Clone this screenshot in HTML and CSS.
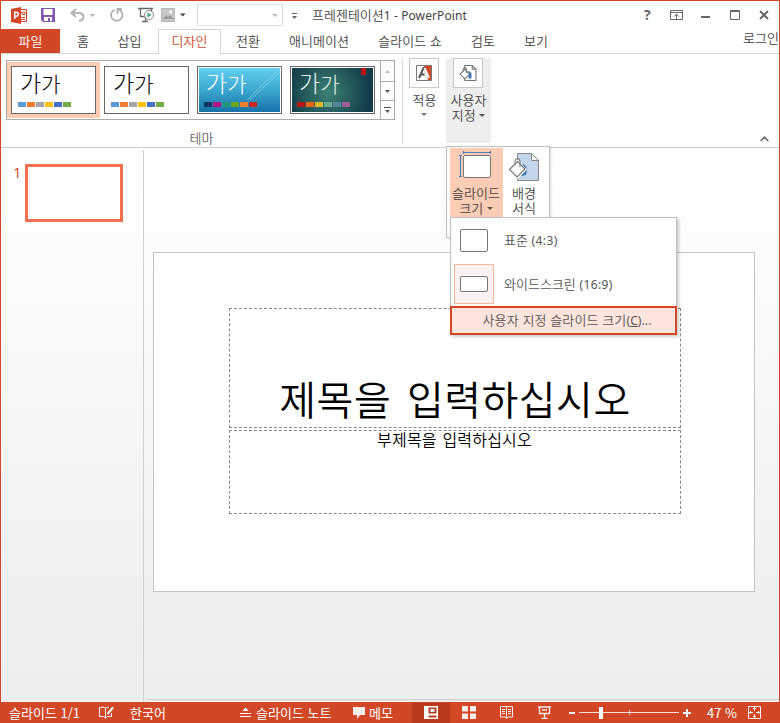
FILE: index.html
```html
<!DOCTYPE html>
<html lang="ko">
<head>
<meta charset="utf-8">
<title>프레젠테이션1 - PowerPoint</title>
<link rel="stylesheet" href="styles.css">
</head>
<body>
<div class="window">
  <header class="titlebar">
    <div class="quick">
      <svg class="q-app" width="17" height="17" viewBox="0 0 17 17"><path d="M8 2.500h7.500v12H8z" fill="#fff" stroke="#d24726"/><path d="M10 10.500h4M10 12.500h4M10 5.500h1.500v2H14" fill="none" stroke="#d24726"/><path d="M13 4v2h2" fill="none" stroke="#d24726"/><path d="M0 2L10 0v17L0 15z" fill="#d24726"/><path d="M3.700 12V5.300h1.500q2 0 2 2T5.200 9.300H4" fill="none" stroke="#fff" stroke-width="1.500"/></svg>
      <svg class="q-save" width="14" height="14" viewBox="0 0 14 14"><path d="M0 0h14v14H2L0 12z" fill="#8659ab"/><path d="M2.500 1h9v6h-9zM3 9h8v4H9v-3H7v3H3z" fill="#fff"/></svg>
      <svg class="q-undo" width="27" height="14" viewBox="0 0 27 14"><path d="M6 1L1.500 5 6 9M2 5h6.500q5 0 5 4 0 3-4.500 4" fill="none" stroke="#b1b1b1" stroke-width="2"/><path d="M20 6h5l-2.500 3z" fill="#b1b1b1"/></svg>
      <svg class="q-redo" width="14" height="14" viewBox="0 0 14 14"><path d="M4.500 1.800A5.700 5.700 0 1 0 9 1.800" fill="none" stroke="#b1b1b1" stroke-width="1.800"/><path d="M7.500 6V1H12" fill="none" stroke="#b1b1b1" stroke-width="1.800"/></svg>
      <svg class="q-show" width="17" height="16" viewBox="0 0 17 16"><path d="M0 1.500h15M2.500 2v7.500H7M4 14.500h6M7.500 10v4M13.500 2v3" fill="none" stroke="#686868" stroke-width="1.300"/><circle cx="11" cy="8" r="4.500" fill="#fff" stroke="#888"/><path d="M9.500 5.500l4 2.500-4 2.500z" fill="#3ba273"/></svg>
      <svg class="q-pic" width="25" height="14" viewBox="0 0 25 14"><path d="M.5.500h13v13H.5z" fill="#c8c8c8" stroke="#b4b4b4"/><path d="M2 11l3-4 2 2 2-2 4 4z" fill="#999"/><circle cx="9.500" cy="4" r="1.500" fill="#fff"/><path d="M19 5.500h5.500L21.750 8.500z" fill="#444"/></svg>
      <div class="q-box"><i class="tri pale"></i></div>
      <svg class="q-more" width="6" height="7" viewBox="0 0 6 7"><path d="M0 .5h5" stroke="#666"/><path d="M0 3h5L2.500 6z" fill="#666"/></svg>
    </div>
    <div class="caption">프레젠테이션<span class="latin">1 - PowerPoint</span></div>
    <div class="controls">
      <span class="help">?</span>
      <svg class="c-ribbon" width="13" height="10" viewBox="0 0 13 10"><path d="M.5.500h12v9H.5zM1 2.500h11" fill="none" stroke="#666"/><path d="M6.500 9V4M4 6.500L6.500 4 9 6.500" fill="none" stroke="#666"/></svg>
      <svg class="c-min" width="9" height="10" viewBox="0 0 9 10"><path d="M0 7h9" stroke="#666" stroke-width="2"/></svg>
      <svg class="c-max" width="10" height="10" viewBox="0 0 10 10"><path d="M.5.500h9v9H.5zM0 1.500h10" fill="none" stroke="#666"/></svg>
      <svg class="c-close" width="10" height="10" viewBox="0 0 10 10"><path d="M1 1l8 8M9 1L1 9" stroke="#666" stroke-width="2"/></svg>
    </div>
  </header>
  <nav class="tabs">
    <span class="tab file">파일</span><span class="tab home">홈</span><span class="tab insert">삽입</span><span class="tab active">디자인</span><span class="tab trans">전환</span><span class="tab anim">애니메이션</span><span class="tab show">슬라이드 쇼</span><span class="tab review">검토</span><span class="tab view">보기</span><span class="login">로그인</span>
  </nav>
  <section class="ribbon">
    <div class="themes">
      <div class="gallery">
        <div class="theme selected"><div class="thumb"><b>가<small>가</small></b><div class="swatches office"><i></i><i></i><i></i><i></i><i></i><i></i></div></div></div>
        <div class="theme"><div class="thumb"><b>가<small>가</small></b><div class="swatches office"><i></i><i></i><i></i><i></i><i></i><i></i></div></div></div>
        <div class="theme"><div class="thumb blue"><svg class="rays" width="83" height="46"><path d="M49 33L81 2M52 33L82 5" stroke="#8bd8ef" opacity=".7"/></svg><b>가<small>가</small></b><div class="swatches celestial"><i></i><i></i><i></i><i></i><i></i><i></i></div></div></div>
        <div class="theme"><div class="thumb teal"><b>가<small>가</small></b><div class="swatches ion"><i></i><i></i><i></i><i></i><i></i><i></i></div></div></div>
        <div class="scroller">
          <span class="off"><svg width="5" height="3"><path d="M0 3h5L2.500 0z" fill="#bbb"/></svg></span>
          <span><svg width="5" height="3"><path d="M0 0h5L2.500 3z" fill="#555"/></svg></span>
          <span><svg width="7" height="6"><path d="M0 .5h7" stroke="#555"/><path d="M1 3h5L3.500 6z" fill="#555"/></svg></span>
        </div>
      </div>
      <div class="group-name">테마</div>
    </div>
    <div class="big variants">
      <div class="iconbox"><svg width="16" height="16" viewBox="0 0 16 16"><path d="M.5.500h15v15H.5z" fill="#fff" stroke="#777"/><path d="M8 1h7v14H12z" fill="#d24726"/><path d="M3 13L7.500 3h1L13 13M5 9.500h6" fill="none" stroke="#555" stroke-width="2"/><path d="M8.500 3L13 13M8.500 9.500H11" stroke="#fff" stroke-width="2"/></svg></div>
      <div class="lbl">적용</div><i class="tri"></i>
    </div>
    <div class="big customize">
      <div class="iconbox"><svg width="18" height="18" viewBox="0 0 34 34"><path d="M11 3h14l7 7v21H11z" fill="#fff" stroke="#777" stroke-width="2"/><path d="M25 3v7h7" fill="none" stroke="#777" stroke-width="2"/><path d="M18 13q8 1 5 15l-5-1z" fill="#3c78b5"/><path d="M2 19L11 10l9 9-9 9z" fill="#fff" stroke="#777" stroke-width="2"/><path d="M8 14v-4q0-3 3-3t3 3v7" fill="none" stroke="#777" stroke-width="2"/></svg></div>
      <div class="lbl">사용자<br>지정 <i class="tri"></i></div>
    </div>
    <svg class="collapse" width="9" height="6" viewBox="0 0 9 6"><path d="M.7 5L4.500 1.200 8.300 5" fill="none" stroke="#666" stroke-width="1.600"/></svg>
  </section>
  <main class="workspace">
    <aside class="slides"><span class="num">1</span><div class="mini"></div></aside>
    <div class="stage">
      <article class="slide">
        <div class="holder title">제목을 입력하십시오</div>
        <div class="holder subtitle">부제목을 입력하십시오</div>
      </article>
    </div>
  </main>
  <footer class="status">
    <span class="s-count">슬라이드 1/1</span>
    <svg class="s-spell" width="15" height="13" viewBox="0 0 15 13"><path d="M6.500 2v10.500M6.500 2Q4 .5.500 1.500v9h4l2 1.500 2-1.500h4V7M6.500 2q2-1 3.500-.5" fill="none" stroke="#fff"/><path d="M14 1.500L8.500 8" stroke="#fff" stroke-width="2"/></svg>
    <span class="s-lang">한국어</span>
    <svg class="s-noteicon" width="11" height="11" viewBox="0 0 11 11"><path d="M0 6.500h11M0 9.500h11" stroke="#fff"/><path d="M2.500 4h6l-3-3.500z" fill="#fff"/></svg>
    <span class="s-notes">슬라이드 노트</span>
    <svg class="s-memoicon" width="12" height="12" viewBox="0 0 12 12"><path d="M0 0h12v8H7l-3 4V8H0z" fill="#fdeeea"/></svg>
    <span class="s-memo">메모</span>
    <span class="s-normal"><svg width="14" height="13" viewBox="0 0 14 13"><path d="M0 0h14v13H0z" fill="#fff"/><path d="M4.500 1.500h8v6h-8zM4.500 9.500h8v2h-8z" fill="#b83b1d"/><path d="M6.500 3h4v3h-4z" fill="#fff"/></svg></span>
    <svg class="s-grid" width="14" height="13" viewBox="0 0 14 13"><path d="M0 0h6v5.500H0zM8 0h6v5.500H8zM0 7.500h6V13H0zM8 7.500h6V13H8z" fill="#fdeeea"/></svg>
    <svg class="s-read" width="13" height="13" viewBox="0 0 13 13"><path d="M.5.500h12v10.500H8L6.500 12.500 5 11H.5zM6.500 1v11M2 3.500h3M2 5.500h3M2 7.500h3M8 3.500h3M8 5.500h3M8 7.500h3" fill="none" stroke="#fdeeea"/></svg>
    <svg class="s-present" width="13" height="13" viewBox="0 0 13 13"><path d="M0 1h13M1.500 1v6.500h10V1M4 4h5M6.500 8v4M3.500 12.300h6" fill="none" stroke="#fdeeea" stroke-width="1.300"/></svg>
    <svg class="s-zoom" width="122" height="13" viewBox="0 0 122 13"><path d="M0 7h6M114 7h8M118 3v8" stroke="#fff" stroke-width="2"/><path d="M10 6.500h100M60.500 4v5" stroke="#fbded6"/><path d="M30 1h4v12h-4z" fill="#fff"/></svg>
    <span class="s-pct">47 %</span>
    <svg class="s-fit" width="13" height="13" viewBox="0 0 13 13"><path d="M.5.500h12v12H.5z" fill="none" stroke="#fdeeea"/><path d="M6.500 1v4M6.500 8v4M1 6.500h4M8 6.500h4M5 3l1.500-1.500L8 3M5 10l1.500 1.500L8 10M3 5L1.500 6.500 3 8M10 5l1.500 1.500L10 8" fill="none" stroke="#fdeeea"/></svg>
  </footer>

  <div class="flyout">
    <div class="fly-item on">
      <svg width="34" height="32" viewBox="0 0 34 32"><path d="M4 2.500h28M4.500 1v3M31.500 1v3M1.500 5v22M0 5.500h3M0 26.500h3" fill="none" stroke="#4a80bd" stroke-width="1.200"/><rect x="4.500" y="5.500" width="27" height="22" rx="1.500" fill="#fff" stroke="#777"/></svg>
      <div class="fly-lbl">슬라이드<br>크기 <i class="tri"></i></div>
    </div>
    <div class="fly-item">
      <svg width="32" height="32" viewBox="0 0 32 32"><path d="M9.500 3.500h14l7 7v20h-21z" fill="#c3d5e8" stroke="#888"/><path d="M23.500 3.500v7h7z" fill="#fff" stroke="#888"/><path d="M14 14q7 1 4 11l-5 1 3-7z" fill="#3c78b5"/><path d="M2 19.500L9.500 12l7.500 7.500-7.500 7.500z" fill="#fff" stroke="#fff" stroke-width="3"/><path d="M1.500 19.500L9.500 11.500l7.500 7.500-8 8z" fill="#fff" stroke="#777" stroke-width="1.200"/><path d="M7 15v-4q0-2.500 2.500-2.500T12 11v6" fill="none" stroke="#777"/></svg>
      <div class="fly-lbl">배경<br>서식</div>
    </div>
  </div>
  <div class="menu">
    <div class="row"><span class="size"><i class="std"></i></span><span>표준 <span class="latin">(4:3)</span></span></div>
    <div class="row"><span class="size current"><i class="wide"></i></span><span>와이드스크린 <span class="latin">(16:9)</span></span></div>
    <div class="custom">사용자 지정 슬라이드 크기<span class="latin">(<u>C</u>)...</span></div>
  </div>
</div>
</body>
</html>
```
FILE: styles.css
```css
* { box-sizing: border-box; }
body { margin: 0; }
svg { display: block; flex: none; }
.window {
  position: relative; width: 780px; height: 723px; overflow: hidden;
  display: flex; flex-direction: column;
  border: 1px solid #d24726; border-bottom: 0; background: #fff;
  font: 13px/16px "Noto Sans CJK KR", "Noto Sans", sans-serif; font-weight: 350; color: #444;
}
.window span, .window div { white-space: nowrap; }
.tri { display: inline-block; width: 0; height: 0; border: 3px solid transparent; border-top-color: #555; border-bottom: 0; }
.tri.pale { border-top-color: #bbb; }

.titlebar { display: flex; height: 28px; align-items: center; }
.quick { display: flex; align-items: center; width: 311px; flex: none; }
.q-app { margin-left: 10px; }
.q-save { margin-left: 13px; }
.q-undo { margin-left: 15px; }
.q-redo { margin-left: 13px; }
.q-show { margin-left: 14px; }
.q-pic { margin-left: 6px; }
.q-box { display: flex; align-items: center; justify-content: flex-end; width: 86px; height: 22px; margin-left: 11px; padding-right: 4px; border: 1px solid #e1e1e1; }
.q-more { margin: 2px 0 0 9px; }
.caption { width: 332px; flex: none; }
.latin { font-family: "Noto Sans", sans-serif; font-size: 12px; font-weight: 400; letter-spacing: .1px; }
.controls { display: flex; align-items: center; }
.help { width: 7px; font: bold 14px/16px "Open Sans", sans-serif; color: #666; }
.c-ribbon { margin-left: 19px; }
.c-min { margin-left: 18px; }
.c-max { margin-left: 20px; }
.c-close { margin-left: 19px; }

.tabs { display: flex; height: 25px; border-bottom: 1px solid #d4d4d4; line-height: 24px; flex: none; }
.tab { text-align: center; flex: none; }
.file { width: 59px; color: #fff; background: #d24726; }
.home { width: 46px; }
.insert { width: 47px; }
.active { width: 63px; height: 25px; color: #d24726; background: #fff; border: 1px solid #d4d4d4; border-bottom: 0; line-height: 22px; margin-left: 5px; }
.trans { width: 54px; }
.anim { width: 88px; }
.show { width: 94px; }
.review { width: 52px; }
.view { width: 54px; }
.login { margin-left: 180px; line-height: 17px; }

.ribbon { display: flex; height: 94px; flex: none; border-bottom: 1px solid #d0d0d0; background: #fff; }
.themes { width: 402px; height: 86px; margin-top: 4px; padding: 2px 0 0 5px; border-right: 1px solid #ddd; flex: none; }
.gallery { display: flex; width: 389px; height: 60px; border: 1px solid #aaa; }
.theme { width: 93px; padding: 5px 4px; flex: none; }
.theme.selected { height: 56px; margin-top: 1px; padding-top: 4px; background: #fcccb5; }
.thumb { position: relative; width: 85px; height: 48px; border: 1px solid #666; background: #fff; padding: 1px 0 0 8px; color: #000; }
.thumb b { display: block; height: 34px; font-size: 23px; font-weight: 300; line-height: 28px; }
.thumb small { font-size: 21px; }
.blue { color: #fff; box-shadow: inset 0 0 0 1px #fff; background: linear-gradient(#64d2f0, #3ca7d0 50%, #1670a6); }
.teal { color: #e5f4f0; box-shadow: inset 0 0 0 1px #fff; background: linear-gradient(#b81414, #b81414) 70px 1px / 5px 7px no-repeat, radial-gradient(circle at 45% 55%, #3d8175, #123c48 80%); }
.rays { position: absolute; left: 0; top: 0; }
.swatches { display: flex; gap: 1px; margin-left: -2px; }
.swatches i { width: 8px; height: 5px; }
.office i:nth-child(1) { background: #5b9bd5; }
.office i:nth-child(2) { background: #ed7d31; }
.office i:nth-child(3) { background: #a5a5a5; }
.office i:nth-child(4) { background: #ffc000; }
.office i:nth-child(5) { background: #4472c4; }
.office i:nth-child(6) { background: #70ad47; }
.celestial i:nth-child(1) { background: #073763; }
.celestial i:nth-child(2) { background: #b01287; }
.celestial i:nth-child(3) { background: #20967d; }
.celestial i:nth-child(4) { background: #6ba51d; }
.celestial i:nth-child(5) { background: #ef7f32; }
.celestial i:nth-child(6) { background: #cb2525; }
.ion i:nth-child(1) { background: #b31818; }
.ion i:nth-child(2) { background: #ea6312; }
.ion i:nth-child(3) { background: #e6b729; }
.ion i:nth-child(4) { background: #6aac90; }
.ion i:nth-child(5) { background: #54849a; }
.ion i:nth-child(6) { background: #9e5e9b; }
.scroller { display: grid; grid-template-rows: 20px 19px 19px; width: 15px; margin-left: 1px; border-left: 1px solid #aaa; }
.scroller span { display: flex; align-items: center; justify-content: center; }
.scroller span + span { border-top: 1px solid #aaa; }
.scroller .off { background: #fcfcfc; }
.group-name { width: 391px; text-align: center; margin-top: 10px; color: #666; }
.big { display: flex; flex-direction: column; align-items: center; height: 85px; margin-top: 4px; flex: none; }
.iconbox { display: flex; align-items: center; justify-content: center; width: 30px; height: 30px; margin-bottom: 4px; border: 1px solid #c8c8c8; background: #fdfdfd; }
.variants { width: 43px; }
.variants .iconbox { margin-right: 1px; }
.variants .tri { margin: 6px 1px 0 0; opacity: .8; }
.customize { width: 45px; background: #eee; }
.customize .iconbox { margin-right: 1px; }
.lbl, .fly-lbl { line-height: 15px; text-align: center; }
.lbl .tri, .fly-item .tri { vertical-align: 3px; }
.collapse { margin: 82px 0 0 269px; }

.workspace { display: flex; height: 554px; flex: none; background: linear-gradient(#fefefe, #fcfcfc 20%, #f0f0f0 80%, #eee); }
.slides { display: flex; width: 143px; height: 551px; margin-top: 2px; padding: 14px 0 0 12px; border-right: 1px solid #d0d0d0; flex: none; }
.num { width: 12px; font: 15px/16px "Open Sans", sans-serif; color: #d24726; }
.mini { width: 98px; height: 58px; border: 3px solid #f27250; background: #fff; }
.stage { width: 633px; height: 552px; margin-left: 2px; padding: 104px 0 0 7px; border-bottom: 1px solid #d0d0d0; }
.slide { width: 602px; height: 340px; padding: 55px 74px 0 75px; border: 1px solid #c3c3c3; background: #fff; color: #000; }
.holder { width: 452px; border: 1px dashed #888; text-align: center; }
.title { height: 120px; padding-top: 60px; font-size: 40px; font-weight: 350; line-height: 58px; letter-spacing: .5px; word-spacing: 4px; }
.subtitle { height: 84px; margin-top: 2px; padding-right: 1px; font-size: 16px; line-height: 17px; letter-spacing: .2px; word-spacing: 1px; font-weight: 350; }

.status { display: flex; align-items: center; height: 21px; background: #d24726; color: #fff; flex: none; font-weight: 400; }
.s-count { width: 98px; padding-left: 8px; flex: none; }
.s-lang { width: 110px; margin-left: 16px; flex: none; }
.s-notes { width: 94px; margin-left: 5px; flex: none; }
.s-memoicon { margin-left: 3px; }
.s-memo { width: 43px; margin-left: 4px; flex: none; }
.s-normal { display: flex; justify-content: center; align-items: center; width: 38px; height: 20px; background: #b83b1d; flex: none; }
.s-grid { margin-left: 12px; }
.s-read { margin-left: 24px; }
.s-present { margin-left: 25px; }
.s-zoom { margin-left: 18px; }
.s-pct { width: 41px; margin-left: 16px; flex: none; }

.flyout { position: absolute; left: 445px; top: 145px; display: flex; width: 104px; height: 92px; padding: 1px 3px; border: 1px solid #c0c0c0; background: #fff; box-shadow: 1px 1px 2px #0002; }
.fly-item { display: flex; flex-direction: column; align-items: center; width: 42px; padding-top: 2px; flex: none; }
.fly-item.on { width: 53px; padding-right: 1px; background: #fcccb5; }
.fly-item svg { margin-bottom: 3px; }
.menu { position: absolute; left: 449px; top: 216px; width: 227px; height: 118px; border: 1px solid #c0c0c0; background: #fff; box-shadow: 2px 2px 3px #0003; color: #555; }
.row { display: flex; align-items: center; height: 44px; padding-left: 3px; }
.row .latin { letter-spacing: .4px; }
.size { display: flex; align-items: center; justify-content: center; width: 40px; height: 40px; margin-right: 10px; }
.size.current { border: 1px solid #f4b99c; background: #fdf0ee; }
.size i { width: 28px; border: 1px solid #777; border-radius: 2px; background: #fff; }
.std { height: 23px; }
.wide { height: 16px; }
.custom { height: 29px; margin: 0 -1px; border: 2px solid #d24726; background: #fde4dd; text-align: center; line-height: 24px; letter-spacing: .1px; padding-left: 7px; }
```
